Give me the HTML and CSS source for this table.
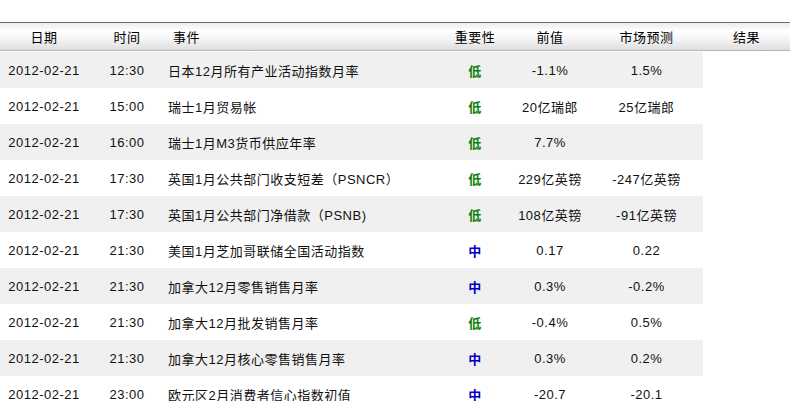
FILE: index.html
```html
<!DOCTYPE html>
<html lang="zh-CN">
<head>
<meta charset="utf-8">
<link rel="stylesheet" href="styles.css">
</head>
<body>
<table class="cal">
  <colgroup>
    <col class="c-date"><col class="c-time"><col class="c-event"><col class="c-imp"><col class="c-prev"><col class="c-fc"><col class="c-res">
  </colgroup>
  <thead>
    <tr>
      <th>日期</th><th>时间</th><th class="left">事件</th><th>重要性</th><th>前值</th><th>市场预测</th><th>结果</th>
    </tr>
  </thead>
  <tbody>
    <tr class="odd"><td>2012-02-21</td><td>12:30</td><td class="ev">日本12月所有产业活动指数月率</td><td class="low">低</td><td>-1.1%</td><td>1.5%</td></tr>
    <tr><td>2012-02-21</td><td>15:00</td><td class="ev">瑞士1月贸易帐</td><td class="low">低</td><td>20亿瑞郎</td><td>25亿瑞郎</td></tr>
    <tr class="odd"><td>2012-02-21</td><td>16:00</td><td class="ev">瑞士1月M3货币供应年率</td><td class="low">低</td><td>7.7%</td><td></td></tr>
    <tr><td>2012-02-21</td><td>17:30</td><td class="ev">英国1月公共部门收支短差（PSNCR）</td><td class="low">低</td><td>229亿英镑</td><td>-247亿英镑</td></tr>
    <tr class="odd"><td>2012-02-21</td><td>17:30</td><td class="ev">英国1月公共部门净借款（PSNB)</td><td class="low">低</td><td>108亿英镑</td><td>-91亿英镑</td></tr>
    <tr><td>2012-02-21</td><td>21:30</td><td class="ev">美国1月芝加哥联储全国活动指数</td><td class="mid">中</td><td>0.17</td><td>0.22</td></tr>
    <tr class="odd"><td>2012-02-21</td><td>21:30</td><td class="ev">加拿大12月零售销售月率</td><td class="mid">中</td><td>0.3%</td><td>-0.2%</td></tr>
    <tr><td>2012-02-21</td><td>21:30</td><td class="ev">加拿大12月批发销售月率</td><td class="low">低</td><td>-0.4%</td><td>0.5%</td></tr>
    <tr class="odd"><td>2012-02-21</td><td>21:30</td><td class="ev">加拿大12月核心零售销售月率</td><td class="mid">中</td><td>0.3%</td><td>0.2%</td></tr>
    <tr><td>2012-02-21</td><td>23:00</td><td class="ev">欧元区2月消费者信心指数初值</td><td class="mid">中</td><td>-20.7</td><td>-20.1</td></tr>
  </tbody>
</table>
</body>
</html>
```
FILE: styles.css
```css
html, body {
  margin: 0;
  padding: 0;
  background: #fff;
}
body {
  padding-top: 22px;
  font-family: "Liberation Sans", "Noto Sans CJK SC", sans-serif;
  font-size: 13px;
  letter-spacing: 0.5px;
  color: #111;
}
.cal {
  width: 790px;
  table-layout: fixed;
  border-collapse: separate;
  border-spacing: 0;
}
.c-date { width: 88px; }
.c-time { width: 78px; }
.c-event { width: 274px; }
.c-imp { width: 70px; }
.c-prev { width: 80px; }
.c-fc { width: 113px; }
.c-res { width: 87px; }

.cal th {
  height: 27px;
  padding: 0;
  font-weight: normal;
  text-align: center;
  color: #000;
  border-top: 1px solid #6e6e6e;
  border-bottom: 1px solid #b4b4b4;
  background: linear-gradient(#ececec 0%, #ffffff 30%, #f4f4f4 60%, #dedede 100%);
}
.cal th.left {
  text-align: left;
  padding-left: 7px;
}
.cal td {
  height: 36px;
  padding: 0;
  text-align: center;
  white-space: nowrap;
}
.cal tbody tr:first-child td {
  border-top: 1px solid #fff;
}
.cal tr.odd td {
  background: #f0f0f0;
  background-clip: padding-box;
}
.cal td.ev {
  text-align: left;
  padding-left: 2px;
}
.cal td.low {
  color: #0a7d0a;
  font-weight: bold;
}
.cal td.mid {
  color: #0000c8;
  font-weight: bold;
}
```
